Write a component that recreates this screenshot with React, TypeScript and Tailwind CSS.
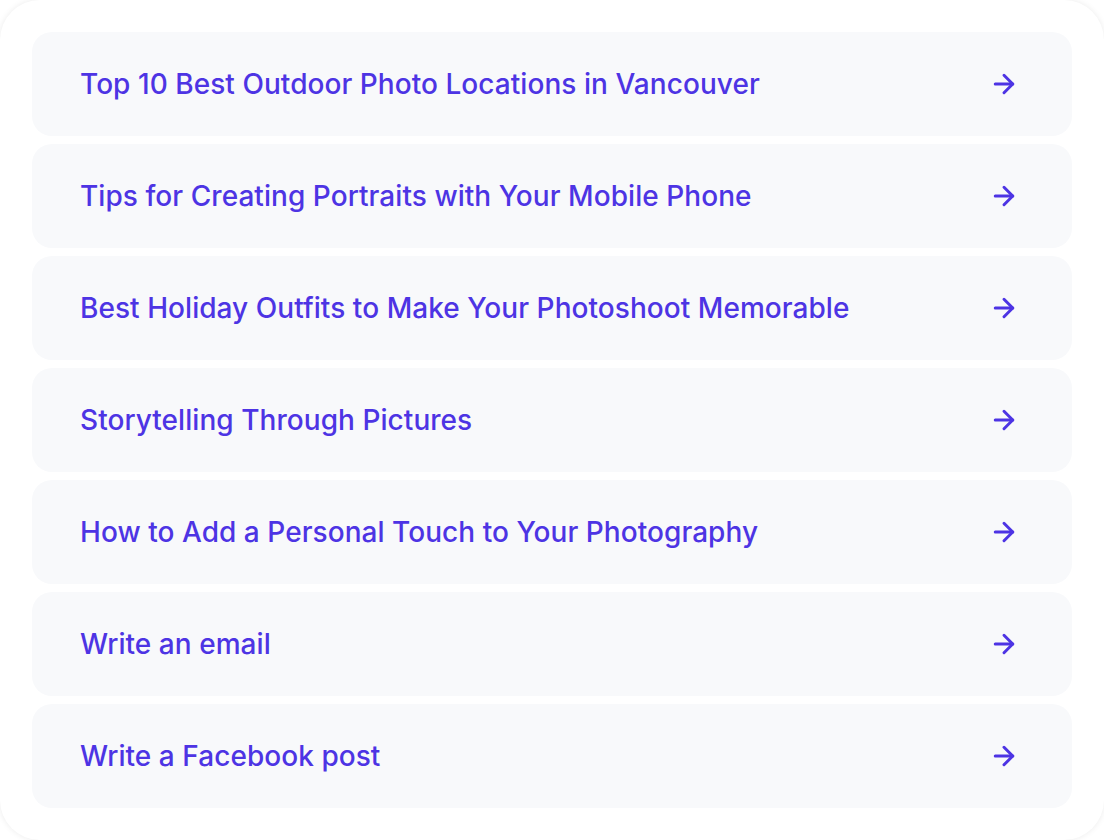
import React from 'react';
import { ArrowRight } from 'lucide-react';

const PROMPTS = [
    'Top 10 Best Outdoor Photo Locations in Vancouver',
    'Tips for Creating Portraits with Your Mobile Phone',
    'Best Holiday Outfits to Make Your Photoshoot Memorable',
    'Storytelling Through Pictures',
    'How to Add a Personal Touch to Your Photography',
    'Write an email',
    'Write a Facebook post',
];

const App: React.FC = () => {
    return (
        <div className="w-[1104px] h-[840px] bg-white overflow-hidden" style={{ fontFamily: 'Inter, "Noto Sans", sans-serif' }}>
            <div className="h-full rounded-[40px] bg-white shadow-[0_0_6px_rgba(0,0,0,0.08)] p-8 flex flex-col gap-2">
                {PROMPTS.map((p) => (
                    <button
                        key={p}
                        className="h-[104px] shrink-0 rounded-[20px] bg-[#f8f9fb] flex items-center justify-between pl-12 pr-[53px] text-left"
                    >
                        <span className="text-[28px] font-medium text-[#4d34e4] tracking-[0.05px]">{p}</span>
                        <ArrowRight className="text-[#4d34e4]" size={30} strokeWidth={2.4} />
                    </button>
                ))}
            </div>
        </div>
    );
};

export default App;
